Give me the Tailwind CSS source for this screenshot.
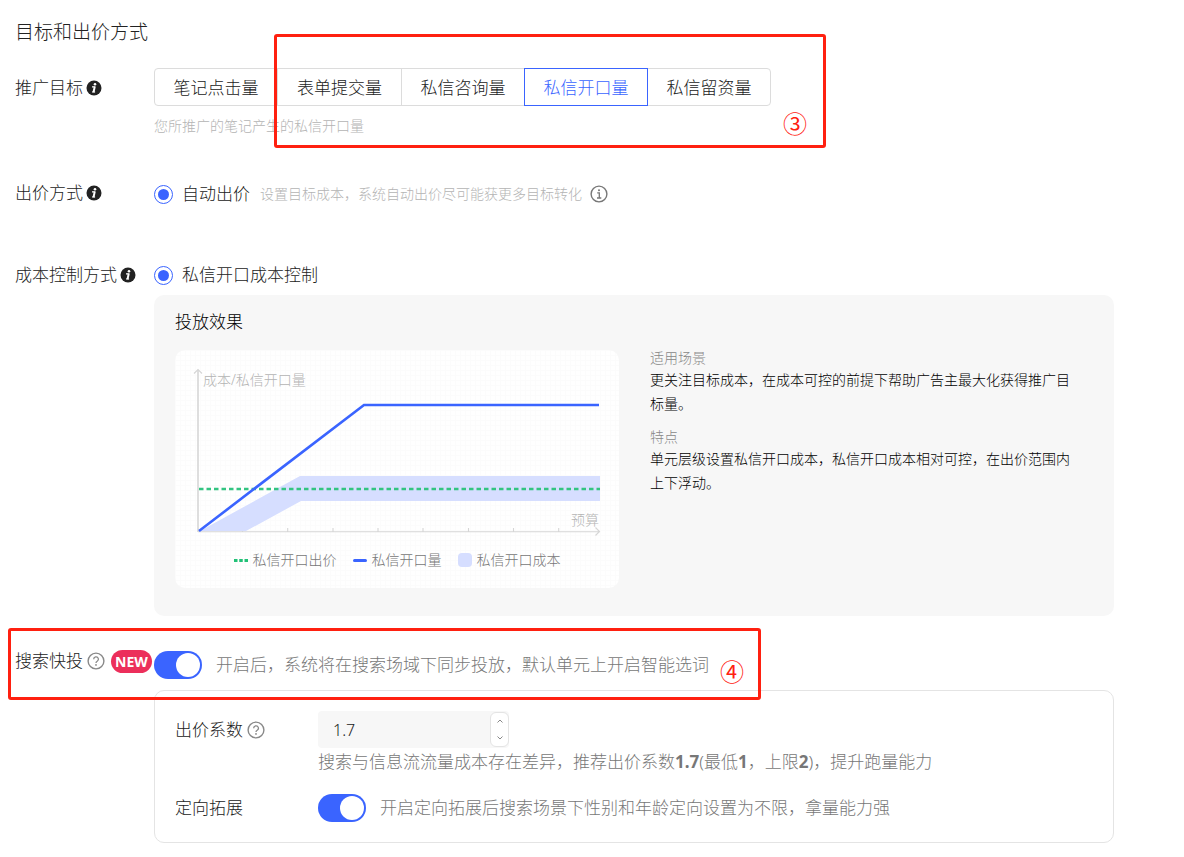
<!DOCTYPE html>
<html lang="zh-CN">
<head>
<meta charset="utf-8">
<title>目标和出价方式</title>
<script src="https://cdn.jsdelivr.net/npm/@tailwindcss/browser@4"></script>
</head>
<body class="bg-white font-['Noto_Sans','Noto_Sans_CJK_SC',sans-serif] font-light text-[17px] leading-6 text-[#222]">
<svg class="hidden" aria-hidden="true">
  <symbol id="info-solid" viewBox="0 0 16 16">
    <circle cx="8" cy="8" r="7.5" fill="#222"/>
    <circle cx="9" cy="4.2" r="1.3" fill="#fff"/>
    <path d="M6 6.900h2.600M6 12h3.100" fill="none" stroke="#fff" stroke-width="1.2"/>
    <path d="M8.800 6.400 7.500 12.200" stroke="#fff" stroke-width="2"/>
  </symbol>
  <symbol id="info-line" viewBox="0 0 18 18">
    <circle cx="9" cy="9" r="7.9" fill="none" stroke="#777" stroke-width="1.4"/>
    <circle cx="9" cy="5.2" r="1" fill="#777"/>
    <path d="M7.2 7.8H9.3V13M7 13h4.3" fill="none" stroke="#777" stroke-width="1.3"/>
  </symbol>
  <symbol id="help" viewBox="0 0 18 18">
    <circle cx="9" cy="9" r="7.9" fill="none" stroke="#888" stroke-width="1.4"/>
    <path d="M6.7 7.2a2.35 2.35 0 1 1 3.5 2C9.4 9.7 9 10 9 11" fill="none" stroke="#888" stroke-width="1.3"/>
    <circle cx="9" cy="12.9" r=".9" fill="#888"/>
  </symbol>
</svg>

<main class="relative flex flex-col pt-[18px] pr-[70px] pb-3 pl-[15px]">
  <h1 class="text-[19px] leading-7 font-light">目标和出价方式</h1>

  <section class="mt-[22px] flex items-start">
    <div class="flex h-10 w-[139px] shrink-0 items-center gap-[3px]">推广目标
      <svg class="size-4"><use href="#info-solid"/></svg>
    </div>
    <div>
      <div class="flex" role="group" aria-label="推广目标">
        <button class="h-[38px] min-w-31 rounded-l border border-[#dcdcdc] pt-px">笔记点击量</button>
        <button class="-ml-px h-[38px] min-w-[125px] border border-[#dcdcdc] pt-px">表单提交量</button>
        <button class="-ml-px h-[38px] min-w-31 border border-[#dcdcdc] pt-px">私信咨询量</button>
        <button class="relative -ml-px h-[38px] min-w-31 border border-[#3a64ff] pt-px text-[#3a64ff]">私信开口量</button>
        <button class="-ml-px h-[38px] min-w-31 rounded-r border border-[#dcdcdc] pt-px">私信留资量</button>
      </div>
      <p class="mt-[10px] text-sm leading-5 text-[#b4b4b4]">您所推广的笔记产生的私信开口量</p>
    </div>
  </section>

  <section class="mt-[46px] flex items-start">
    <div class="flex h-[22px] w-[139px] shrink-0 items-center gap-[3px]">出价方式
      <svg class="size-4"><use href="#info-solid"/></svg>
    </div>
    <div class="flex items-center">
      <label class="flex items-center gap-[9px]">
        <input type="radio" name="bid" checked class="flex size-[19px] appearance-none items-center justify-center rounded-full border border-[#3a64ff] before:size-[11px] before:rounded-full before:bg-[#3a64ff] before:content-['']">自动出价</label>
      <span class="ml-[10px] text-sm text-[#b4b4b4]">设置目标成本，系统自动出价尽可能获更多目标转化</span>
      <svg class="ml-2 size-[18px]"><use href="#info-line"/></svg>
    </div>
  </section>

  <section class="mt-[57px] flex items-start">
    <div class="flex w-[139px] shrink-0 items-center gap-[3px]">成本控制方式
      <svg class="size-4"><use href="#info-solid"/></svg>
    </div>
    <div class="min-w-0 grow">
      <label class="flex items-center gap-[9px]">
        <input type="radio" name="cost" checked class="flex size-[19px] appearance-none items-center justify-center rounded-full border border-[#3a64ff] before:size-[11px] before:rounded-full before:bg-[#3a64ff] before:content-['']">私信开口成本控制</label>
      <div class="mt-2 rounded-[10px] bg-[#f7f7f7] px-[21px] pt-[15px] pb-7">
        <h2 class="font-light text-black">投放效果</h2>
        <div class="mt-4 flex items-start gap-[31px]">
          <figure class="w-[444px] shrink-0 rounded-[10px] bg-white bg-[linear-gradient(#fcfcfc_1px,transparent_1px),linear-gradient(90deg,#fcfcfc_1px,transparent_1px)] bg-size-[5px_5px] pb-[18px]">
            <svg class="block h-[200px] w-full font-light" viewBox="0 0 444 200" font-size="14">
              <g fill="none" stroke="#d6d6d6">
                <path d="M23 20V182" stroke-width="1.6"/>
                <path d="M19 23.500l4-4 4 4" stroke-width="1.2"/>
                <path d="M23 181.700H425M420.500 177.500l4 4-4 4M67.500 178v4M112.700 178v4M158 178v4M203 178v4M248 178v4M293.500 178v4M338.500 178v4M383.700 178v4" stroke-width="1.1"/>
              </g>
              <path d="M25 181 125 126H425V151H126L71 181z" fill="#d6deff"/>
              <path d="M24 139H425" stroke="#33c481" stroke-width="2.6" stroke-dasharray="4.5 3"/>
              <path d="M24 181 189 55H424" fill="none" stroke="#3a64ff" stroke-width="2.6"/>
              <text x="28" y="35" fill="#b4b4b4">成本/私信开口量</text>
              <text x="424" y="175" text-anchor="end" fill="#b4b4b4">预算</text>
            </svg>
            <figcaption class="flex items-center justify-center gap-4 text-sm leading-5 text-[#777]">
              <span class="flex items-center gap-[5px]"><svg class="h-[3px] w-[14px]"><path d="M0 1.500H14" stroke="#22c177" stroke-width="3" stroke-dasharray="3.500 1.750"/></svg>私信开口出价</span>
              <span class="flex items-center gap-[5px]"><i class="h-[3px] w-[14px] rounded-sm bg-[#3a64ff]"></i>私信开口量</span>
              <span class="flex items-center gap-[5px]"><i class="size-[14px] rounded-sm bg-[#d6deff]"></i>私信开口成本</span>
            </figcaption>
          </figure>
          <dl class="max-w-[432px] text-sm">
            <dt class="leading-4 text-[#888]">适用场景</dt>
            <dd class="mt-[2px] leading-6 text-black">更关注目标成本，在成本可控的前提下帮助广告主最大化获得推广目标量。</dd>
            <dt class="mt-[13px] leading-4 text-[#888]">特点</dt>
            <dd class="mt-[2px] leading-6 text-black">单元层级设置私信开口成本，私信开口成本相对可控，在出价范围内上下浮动。</dd>
          </dl>
        </div>
      </div>
    </div>
  </section>

  <section class="mt-[35px] flex items-start">
    <div class="flex h-5 w-[139px] shrink-0 items-center"><label for="quick">搜索快投</label>
      <svg class="ml-1 size-[18px]"><use href="#help"/></svg>
      <span class="ml-[6px] rounded-full bg-[#ec2f5b] px-1 font-['Open_Sans','Noto_Sans',sans-serif] text-sm leading-[23px] font-bold text-white">NEW</span>
    </div>
    <div class="min-w-0 grow">
      <div class="flex items-center gap-[14px]">
        <input id="quick" type="checkbox" role="switch" checked class="flex h-7 w-12 shrink-0 appearance-none items-center justify-end rounded-full bg-[#3a64ff] p-[2px] before:size-6 before:rounded-full before:bg-white before:content-['']">
        <span class="text-[#777]">开启后，系统将在搜索场域下同步投放，默认单元上开启智能选词</span>
      </div>
      <div class="mt-[11px] rounded-[10px] border border-[#e4e4e4] p-5">
        <div class="flex items-start">
          <div class="flex h-[38px] w-[143px] shrink-0 items-center gap-1"><label for="ratio">出价系数</label>
            <svg class="size-[18px]"><use href="#help"/></svg>
          </div>
          <div>
            <div class="flex h-[37px] w-[191px] items-center rounded bg-[#f7f7f7]">
              <input id="ratio" type="text" value="1.7" class="h-full min-w-0 grow bg-transparent pl-[15px] text-base outline-none">
              <div class="flex h-[35px] w-[19px] shrink-0 flex-col rounded-md border border-[#e4e4e4] bg-white">
                <button class="flex flex-1 items-center justify-center" aria-label="增加"><svg class="h-1 w-[6px]" viewBox="0 0 6 4"><path d="M.5 3.500 3 1l2.500 2.500" fill="none" stroke="#888"/></svg></button>
                <button class="flex flex-1 items-center justify-center" aria-label="减少"><svg class="h-1 w-[6px]" viewBox="0 0 6 4"><path d="M.5.5 3 3 5.500.5" fill="none" stroke="#888"/></svg></button>
              </div>
            </div>
            <p class="mt-[2px] text-[#777]">搜索与信息流流量成本存在差异，推荐出价系数<b class="font-bold">1.7</b>(最低<b class="font-bold">1</b>，上限<b class="font-bold">2</b>)，提升跑量能力</p>
          </div>
        </div>
        <div class="mt-5 flex items-center">
          <label for="expand" class="w-[143px] shrink-0">定向拓展</label>
          <input id="expand" type="checkbox" role="switch" checked class="flex h-7 w-12 shrink-0 appearance-none items-center justify-end rounded-full bg-[#3a64ff] p-[2px] before:size-6 before:rounded-full before:bg-white before:content-['']">
          <span class="ml-[14px] text-[#777]">开启定向拓展后搜索场景下性别和年龄定向设置为不限，拿量能力强</span>
        </div>
      </div>
    </div>
  </section>

  <!-- Annotation frames laid over the form -->
  <div class="pointer-events-none absolute top-[34px] left-[274px] flex h-[114px] w-[552px] items-end justify-end rounded-[3px] border-3 border-[#ff2010] pr-4 pb-[9px] text-2xl leading-6 font-normal text-[#ff2010]">③</div>
  <div class="pointer-events-none absolute top-[628px] left-2 flex h-[72px] w-[753px] items-end justify-end rounded-[3px] border-3 border-[#ff2010] pr-[14px] pb-[13px] text-2xl leading-6 font-normal text-[#ff2010]">④</div>
</main>
</body>
</html>
